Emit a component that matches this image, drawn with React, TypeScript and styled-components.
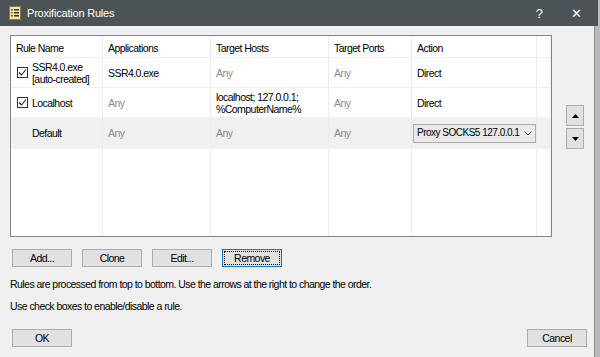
import React from 'react';
import styled, { createGlobalStyle } from 'styled-components';

const Global = createGlobalStyle`
  html, body { margin: 0; padding: 0; }
  body {
    width: 600px;
    height: 357px;
    overflow: hidden;
    background: #b9bcbe;
    font-family: "Liberation Sans", Arial, sans-serif;
    font-size: 10.5px;
    letter-spacing: -0.55px;
    color: #000;
  }
`;

const COLS = '92px 108px 118px 83px 125px 1fr';

const Screen = styled.div`
  display: flex;
  width: 600px;
  height: 357px;
`;

const Dialog = styled.div`
  width: 594px;
  height: 357px;
  display: flex;
  flex-direction: column;
  background: #f0f0f0;
  border-right: 1px solid #8c9194;
`;

const TitleBar = styled.div`
  height: 26px;
  background: #4b5356;
  display: flex;
  align-items: center;
  padding-left: 9px;
  color: #fff;
  flex-shrink: 0;
  margin-right: -4px;
`;

const Title = styled.span`
  font-size: 11px;
  letter-spacing: -0.2px;
  margin-left: 6px;
  flex: 1;
`;

const TitleButton = styled.span<{ $w: number }>`
  width: ${p => p.$w}px;
  text-align: center;
  font-size: 13px;
  color: #fff;
`;

const Body = styled.div`
  flex: 1;
  display: flex;
  flex-direction: column;
  padding: 9px 7px 10px 10px;
`;

const TableArea = styled.div`
  display: flex;
  align-items: flex-start;
`;

const Table = styled.div`
  width: 542px;
  height: 202px;
  box-sizing: border-box;
  border: 1px solid #828790;
  background: #fff;
  display: flex;
  flex-direction: column;
`;

const Row = styled.div<{ $h: number; $selected?: boolean; $fill?: boolean }>`
  display: grid;
  grid-template-columns: ${COLS};
  height: ${p => p.$h}px;
  flex: ${p => (p.$fill ? 1 : 'none')};
  background: ${p => (p.$selected ? '#f0f0f0' : '#fff')};
  border-bottom: ${p => (p.$fill ? 'none' : '1px solid #f0f0f0')};
`;

const Cell = styled.div<{ $muted?: boolean; $pad?: number }>`
  display: flex;
  align-items: center;
  padding-left: ${p => p.$pad ?? 5}px;
  border-right: 1px solid #ececec;
  color: ${p => (p.$muted ? '#8c8c8c' : '#000')};
  line-height: 12px;
  white-space: nowrap;
  overflow: hidden;
`;

const HeadCell = styled(Cell)`
  padding-top: 2px;
`;

const Stack = styled.div`
  display: flex;
  flex-direction: column;
`;

const CheckBox = styled.span`
  width: 11px;
  height: 11px;
  box-sizing: border-box;
  border: 1px solid #333;
  background: #fff;
  margin-right: 4px;
  display: flex;
  align-items: center;
  justify-content: center;
  flex-shrink: 0;
`;

const Combo = styled.div`
  width: 123px;
  height: 19px;
  box-sizing: border-box;
  margin-left: -4px;
  border: 1px solid #adadad;
  background: #e9e9e9;
  display: flex;
  align-items: center;
  padding: 0 3px 0 3px;
  justify-content: space-between;
`;

const ComboText = styled.span`
  font-size: 10px;
  letter-spacing: -0.5px;
`;

const Arrows = styled.div`
  display: flex;
  flex-direction: column;
  gap: 2px;
  margin-top: 70px;
  margin-left: 14px;
`;

const ArrowButton = styled.div`
  width: 18px;
  height: 21px;
  box-sizing: border-box;
  border: 1px solid #adadad;
  background: #e1e1e1;
  display: flex;
  align-items: center;
  justify-content: center;
`;

const ButtonRow = styled.div`
  display: flex;
  gap: 10px;
  margin-top: 12px;
  padding-left: 2px;
`;

const Button = styled.div<{ $focused?: boolean }>`
  width: 60px;
  height: 18px;
  box-sizing: border-box;
  border: 1px solid ${p => (p.$focused ? '#0078d7' : '#adadad')};
  background: #e1e1e1;
  display: flex;
  align-items: center;
  justify-content: center;
  position: relative;
  &::after {
    content: '';
    display: ${p => (p.$focused ? 'block' : 'none')};
    position: absolute;
    inset: 1px;
    border: 1px dotted #000;
  }
`;

const Note = styled.div<{ $top: number }>`
  margin-top: ${p => p.$top}px;
  line-height: 13px;
`;

const Footer = styled.div`
  margin-top: auto;
  display: flex;
  justify-content: space-between;
  padding-left: 2px;
`;

const Check = () => (
  <svg width="9" height="9" viewBox="0 0 9 9">
    <path d="M1 4.5 L3.5 7 L8 1.5" fill="none" stroke="#222" strokeWidth="1.1" />
  </svg>
);

const Tri = ({ up }: { up?: boolean }) => (
  <svg width="7" height="4" viewBox="0 0 7 4">
    <path d={up ? 'M3.5 0 L7 4 L0 4 Z' : 'M0 0 L7 0 L3.5 4 Z'} fill="#000" />
  </svg>
);

const RulesIcon = () => (
  <svg width="12" height="14" viewBox="0 0 12 14">
    <rect x="0.5" y="0.5" width="11" height="13" fill="#f4e6a8" stroke="#8b7a3a" />
    <rect x="2" y="3" width="2" height="1.5" fill="#d33" />
    <rect x="5" y="3" width="5" height="1.5" fill="#333" />
    <rect x="2" y="6" width="2" height="1.5" fill="#3a3" />
    <rect x="5" y="6" width="5" height="1.5" fill="#333" />
    <rect x="2" y="9" width="2" height="1.5" fill="#d33" />
    <rect x="5" y="9" width="5" height="1.5" fill="#333" />
  </svg>
);

const Chevron = () => (
  <svg width="8" height="5" viewBox="0 0 8 5" style={{ flexShrink: 0 }}>
    <path d="M0.5 0.5 L4 4 L7.5 0.5" fill="none" stroke="#555" strokeWidth="1" />
  </svg>
);

const empty = Array.from({ length: 6 });

export default function App() {
  return (
    <>
      <Global />
      <Screen>
        <Dialog>
          <TitleBar>
            <RulesIcon />
            <Title>Proxification Rules</Title>
            <TitleButton $w={30}>?</TitleButton>
            <TitleButton $w={44}>✕</TitleButton>
          </TitleBar>
          <Body>
            <TableArea>
              <Table>
                <Row $h={21}>
                  <HeadCell>Rule Name</HeadCell>
                  <HeadCell>Applications</HeadCell>
                  <HeadCell>Target Hosts</HeadCell>
                  <HeadCell>Target Ports</HeadCell>
                  <HeadCell>Action</HeadCell>
                  <HeadCell />
                </Row>
                <Row $h={29}>
                  <Cell $pad={6}>
                    <CheckBox><Check /></CheckBox>
                    <Stack>
                      <span>SSR4.0.exe</span>
                      <span>[auto-created]</span>
                    </Stack>
                  </Cell>
                  <Cell>SSR4.0.exe</Cell>
                  <Cell $muted>Any</Cell>
                  <Cell $muted>Any</Cell>
                  <Cell>Direct</Cell>
                  <Cell />
                </Row>
                <Row $h={29}>
                  <Cell $pad={6}>
                    <CheckBox><Check /></CheckBox>
                    Localhost
                  </Cell>
                  <Cell $muted>Any</Cell>
                  <Cell>
                    <Stack>
                      <span>localhost; 127.0.0.1;</span>
                      <span>%ComputerName%</span>
                    </Stack>
                  </Cell>
                  <Cell $muted>Any</Cell>
                  <Cell>Direct</Cell>
                  <Cell />
                </Row>
                <Row $h={30} $selected>
                  <Cell $pad={21}>Default</Cell>
                  <Cell $muted>Any</Cell>
                  <Cell $muted>Any</Cell>
                  <Cell $muted>Any</Cell>
                  <Cell>
                    <Combo>
                      <ComboText>Proxy SOCKS5 127.0.0.1</ComboText>
                      <Chevron />
                    </Combo>
                  </Cell>
                  <Cell />
                </Row>
                <Row $h={0} $fill>
                  {empty.map((_, i) => (
                    <Cell key={i} />
                  ))}
                </Row>
              </Table>
              <Arrows>
                <ArrowButton><Tri up /></ArrowButton>
                <ArrowButton><Tri /></ArrowButton>
              </Arrows>
            </TableArea>
            <ButtonRow>
              <Button>Add...</Button>
              <Button>Clone</Button>
              <Button>Edit...</Button>
              <Button $focused>Remove</Button>
            </ButtonRow>
            <Note $top={11}>Rules are processed from top to bottom. Use the arrows at the right to change the order.</Note>
            <Note $top={9}>Use check boxes to enable/disable a rule.</Note>
            <Footer>
              <Button>OK</Button>
              <Button>Cancel</Button>
            </Footer>
          </Body>
        </Dialog>
      </Screen>
    </>
  );
}
